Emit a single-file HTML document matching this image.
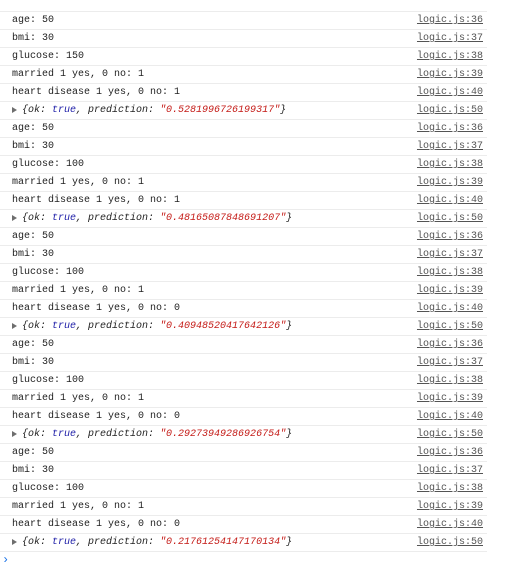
<!DOCTYPE html><html><head><style>
body{margin:0;background:#fff;width:511px;height:565px;overflow:hidden;font-family:"Liberation Mono",monospace;font-size:10px;color:#222}
.wrap{position:absolute;top:11px;left:0;width:487px;border-top:1px solid #ececec}
.r{height:17px;border-bottom:1px solid #ececec;position:relative;line-height:17px}
.t{position:absolute;left:12px;top:0;white-space:pre}
.l{position:absolute;right:4px;top:0;color:#545454;text-decoration:underline}
.o{font-style:italic;left:22px}
.tri{position:absolute;left:12px;top:5px;width:0;height:0;border-left:5px solid #6e6e6e;border-top:3px solid transparent;border-bottom:3px solid transparent}
.b{color:#1a1aa6}.s{color:#c41a16}
.p{position:absolute;left:2px;top:553px;color:#1a73e8;font-size:12px}
</style></head><body><div class="wrap">
<div class="r"><span class="t">age: 50</span><span class="l">logic.js:36</span></div>
<div class="r"><span class="t">bmi: 30</span><span class="l">logic.js:37</span></div>
<div class="r"><span class="t">glucose: 150</span><span class="l">logic.js:38</span></div>
<div class="r"><span class="t">married 1 yes, 0 no: 1</span><span class="l">logic.js:39</span></div>
<div class="r"><span class="t">heart disease 1 yes, 0 no: 1</span><span class="l">logic.js:40</span></div>
<div class="r"><span class="tri"></span><span class="t o">{ok: <span class="b">true</span>, prediction: <span class="s">"0.5281996726199317"</span>}</span><span class="l">logic.js:50</span></div>
<div class="r"><span class="t">age: 50</span><span class="l">logic.js:36</span></div>
<div class="r"><span class="t">bmi: 30</span><span class="l">logic.js:37</span></div>
<div class="r"><span class="t">glucose: 100</span><span class="l">logic.js:38</span></div>
<div class="r"><span class="t">married 1 yes, 0 no: 1</span><span class="l">logic.js:39</span></div>
<div class="r"><span class="t">heart disease 1 yes, 0 no: 1</span><span class="l">logic.js:40</span></div>
<div class="r"><span class="tri"></span><span class="t o">{ok: <span class="b">true</span>, prediction: <span class="s">"0.48165087848691207"</span>}</span><span class="l">logic.js:50</span></div>
<div class="r"><span class="t">age: 50</span><span class="l">logic.js:36</span></div>
<div class="r"><span class="t">bmi: 30</span><span class="l">logic.js:37</span></div>
<div class="r"><span class="t">glucose: 100</span><span class="l">logic.js:38</span></div>
<div class="r"><span class="t">married 1 yes, 0 no: 1</span><span class="l">logic.js:39</span></div>
<div class="r"><span class="t">heart disease 1 yes, 0 no: 0</span><span class="l">logic.js:40</span></div>
<div class="r"><span class="tri"></span><span class="t o">{ok: <span class="b">true</span>, prediction: <span class="s">"0.40948520417642126"</span>}</span><span class="l">logic.js:50</span></div>
<div class="r"><span class="t">age: 50</span><span class="l">logic.js:36</span></div>
<div class="r"><span class="t">bmi: 30</span><span class="l">logic.js:37</span></div>
<div class="r"><span class="t">glucose: 100</span><span class="l">logic.js:38</span></div>
<div class="r"><span class="t">married 1 yes, 0 no: 1</span><span class="l">logic.js:39</span></div>
<div class="r"><span class="t">heart disease 1 yes, 0 no: 0</span><span class="l">logic.js:40</span></div>
<div class="r"><span class="tri"></span><span class="t o">{ok: <span class="b">true</span>, prediction: <span class="s">"0.29273949286926754"</span>}</span><span class="l">logic.js:50</span></div>
<div class="r"><span class="t">age: 50</span><span class="l">logic.js:36</span></div>
<div class="r"><span class="t">bmi: 30</span><span class="l">logic.js:37</span></div>
<div class="r"><span class="t">glucose: 100</span><span class="l">logic.js:38</span></div>
<div class="r"><span class="t">married 1 yes, 0 no: 1</span><span class="l">logic.js:39</span></div>
<div class="r"><span class="t">heart disease 1 yes, 0 no: 0</span><span class="l">logic.js:40</span></div>
<div class="r"><span class="tri"></span><span class="t o">{ok: <span class="b">true</span>, prediction: <span class="s">"0.21761254147170134"</span>}</span><span class="l">logic.js:50</span></div>
</div><div class="p">&#x203A;</div></body></html>
